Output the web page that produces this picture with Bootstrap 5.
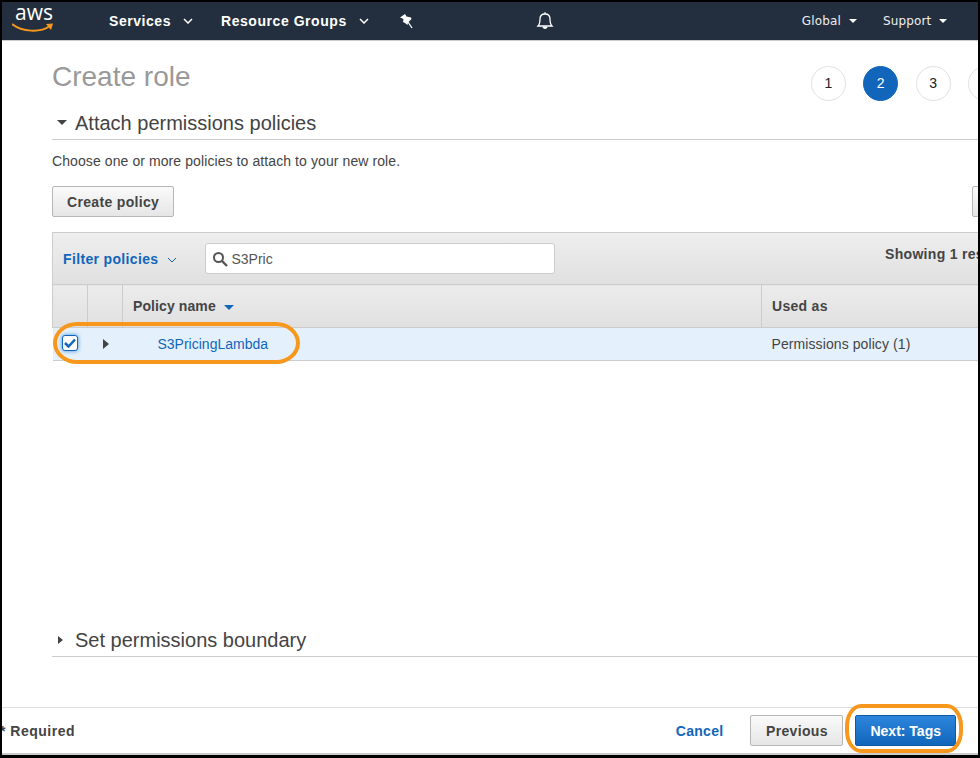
<!DOCTYPE html>
<html lang="en">
<head>
    <meta charset="UTF-8">
    <title>Create role</title>
    <link href="https://cdn.jsdelivr.net/npm/bootstrap@5.3.0/dist/css/bootstrap.min.css" rel="stylesheet">
    <style>
        html, body { height: 100%; margin: 0; background: #000; overflow: hidden; }
        body { font-family: "Liberation Sans", Arial, sans-serif; font-size: 14px; color: #444; }
        .console-frame { width: 976px; height: 753px; margin: 2px 0 0 2px; background: #fff; overflow: hidden; position: relative; }
        .top-nav { height: 38px; background: #232f3e; color: #fff; flex: none; }
        .nav-rule { height: 1px; background: #ccc; flex: none; }
        .aws-logo { width: 41px; margin-left: 11px; position: relative; height: 38px; flex: none; }
        .aws-word { position: absolute; left: 2px; top: -2px; font-family: "Open Sans", sans-serif; font-size: 21px; line-height: 24px; color: #fff; }
        .aws-logo svg { position: absolute; left: -1px; top: 21px; }
        .nav-main { font-weight: 700; font-size: 14px; letter-spacing: .55px; }
        .nav-small { font-family: "DejaVu Sans", sans-serif; font-size: 12px; letter-spacing: .15px; color: #eee; }
        .nav-services { margin-left: 55px; }
        .nav-groups { margin-left: 28px; }
        .nav-chevron { margin-left: 12px; }
        .nav-pin { margin-left: 31px; }
        .nav-bell { margin-left: 123px; }
        .nav-global { margin-left: 248px; }
        .nav-support { margin-left: 26px; }
        .page-body { width: 963px; margin-left: 50px; flex: 1 1 auto; display: flex; flex-direction: column; }
        .page-title { font-size: 28px; font-weight: 400; color: #999; margin: 0; line-height: 32px; }
        .title-row { padding-top: 20px; height: 61px; }
        .step-dots { gap: 17.4px; margin-left: auto; margin-top: 5px; flex: none; margin-right: 12px; }
        .step-dot { width: 35px; height: 35px; border-radius: 50%; border: 1px solid #e1e1e1; color: #222; font-size: 14px; display: flex; align-items: center; justify-content: center; background: #fff; }
        .step-dot.on { background: #1166bb; border-color: #1166bb; color: #fff; }
        .section-head { font-size: 20px; line-height: 24px; color: #444; border-bottom: 1px solid #ccc; height: 38px; padding: 4px 0 0 5px; font-weight: 400; margin: 0; display: flex; align-items: center; gap: 8px; flex: none; }
        .intro-text { margin: 12px 0 0; line-height: 18px; letter-spacing: .09px; }
        .action-row { margin-top: 16px; }
        .btn-aws { font-size: 14px; font-weight: 700; color: #444; height: 31px; padding: 1px 14px 0; border: 1px solid #b7b7b7; border-radius: 2px; background: linear-gradient(#fafafa, #e6e6e6); line-height: 28px; letter-spacing: .33px; }
        .btn-clipped { width: 43px; margin-left: auto; }
        .btn-prev { min-width: 93px; }
        .filter-bar { height: 52px; margin-top: 15px; background: linear-gradient(#eee, #e0e0e0); border: 1px solid #ccc; border-bottom: 0; padding: 2px 4px 0 10px; }
        .filter-link { font-weight: 700; color: #1166bb; letter-spacing: .35px; }
        .search-box { width: 350px; height: 31px; margin-left: 28px; margin-bottom: 2px; background: #fff; border: 1px solid #ccc; border-radius: 3px; padding-left: 6px; gap: 4px; color: #555; }
        .search-text { padding-top: 1px; }
        .showing { margin-left: auto; margin-bottom: 10px; font-weight: 700; color: #444; white-space: nowrap; letter-spacing: .3px; }
        .policy-table { table-layout: fixed; width: 100%; margin: 0; border-collapse: collapse; }
        .policy-table th { height: 43px; padding: 0 10px; font-weight: 700; font-size: 14px; color: #444; background: linear-gradient(#ececec, #e0e0e0); border: 1px solid #ccc; vertical-align: middle; letter-spacing: .1px; }
        .policy-table td { height: 33px; padding: 0 10px; background: #e4f1fc; border: 0; border-bottom: 1px solid #ccc; color: #444; vertical-align: middle; }
        .col-tick { width: 35px; }
        .col-name { width: 639px; }
        .policy-table .th-spaced { letter-spacing: .3px; }
        .policy-link { color: #1166bb; padding-left: 25px; }
        .used-cell { letter-spacing: .09px; }
        .check-box { width: 16px; height: 16px; border: 1px solid #1166bb; border-radius: 3px; background: #fff; display: flex; align-items: center; justify-content: center; box-shadow: 0 0 4px #3d8fdc; margin: -2px 0 0 -1px; }
        .caret-r { width: 0; height: 0; border-left: 5px solid #444; border-top: 4px solid transparent; border-bottom: 4px solid transparent; display: inline-block; }
        .caret-d { width: 0; height: 0; border-top: 5px solid #444; border-left: 5px solid transparent; border-right: 5px solid transparent; display: inline-block; }
        .caret-blue { border-top-color: #1166bb; margin-left: 8px; vertical-align: 1px; }
        .caret-row { border-left-width: 6px; border-top-width: 5px; border-bottom-width: 5px; margin-left: 5px; }
        .caret-head { margin: 0 4px 0 1px; }
        .nav-caret { margin-left: 8px; border-top: 4px solid #fff; border-left-width: 4px; border-right-width: 4px; }
        .body-spacer { flex: 1 1 auto; }
        .foot-gap { height: 50px; flex: none; }
        .page-foot { height: 48px; flex: none; border-top: 1px solid #ddd; border-bottom: 2px solid #ccc; padding-right: 22px; }
        .required-note { font-weight: 700; color: #444; margin-right: auto; margin-left: -2px; padding-top: 2px; letter-spacing: .5px; }
        .cancel-link { font-weight: 700; color: #1166bb; margin-right: 27px; padding-top: 2px; letter-spacing: .3px; }
        .btn-next { color: #fff; background: linear-gradient(#2d86dc, #1166bb); border-color: #0e5aa6; margin-left: 12px; padding: 1px 14px 0; letter-spacing: 0; }
        .btn-next:hover { color: #fff; }
        .mark-ring { position: absolute; border: 4px solid #f7981d; }
        .ring-row { left: 51px; top: 320px; width: 247px; height: 42px; border-radius: 24px / 21px; }
        .ring-next { left: 843px; top: 702px; width: 118px; height: 49px; border-radius: 16px / 22px; }
    </style>
</head>
<body>
    <div class="console-frame d-flex flex-column">
        <nav class="top-nav d-flex align-items-center">
            <div class="aws-logo">
                <span class="aws-word">aws</span>
                <svg width="44" height="12" viewBox="0 0 44 12"><path d="M0 1C10 9 28 10 38 3" fill="none" stroke="#f7981d" stroke-width="2"/><path d="M34 1l7-.5-2 6.500z" fill="#f7981d"/></svg>
            </div>
            <span class="nav-main nav-services">Services</span>
            <svg class="nav-chevron" width="10" height="6" viewBox="0 0 10 6"><path d="M1 1l4 4 4-4" fill="none" stroke="#fff" stroke-width="1.5"/></svg>
            <span class="nav-main nav-groups">Resource Groups</span>
            <svg class="nav-chevron" width="10" height="6" viewBox="0 0 10 6"><path d="M1 1l4 4 4-4" fill="none" stroke="#fff" stroke-width="1.5"/></svg>
            <svg class="nav-pin" width="13" height="15" viewBox="0 0 13 15"><path d="M0 3.500L5 0l1.500 2.500L11 3.500l.5 1.500-3.500 3.500-.5 2.500-2.500-2L3 8l.5-3z" fill="#fff"/><path d="M8 8l4 6" stroke="#fff" stroke-width="1.300"/></svg>
            <svg class="nav-bell" width="18" height="20" viewBox="0 0 18 20"><path d="M2 15c2-2 2-4 2-7 0-3 2-5 5-5s5 2 5 5c0 3 0 5 2 7z" fill="none" stroke="#fff" stroke-width="1.300"/><path d="M9 1v2M7 16c0 2 4 2 4 0z" fill="#fff" stroke="#fff"/></svg>
            <span class="nav-small nav-global">Global</span>
            <span class="caret-d nav-caret"></span>
            <span class="nav-small nav-support">Support</span>
            <span class="caret-d nav-caret"></span>
        </nav>
        <div class="nav-rule"></div>
        <main class="page-body">
            <div class="title-row d-flex">
                <h1 class="page-title">Create role</h1>
                <div class="step-dots d-flex">
                    <div class="step-dot">1</div>
                    <div class="step-dot on">2</div>
                    <div class="step-dot">3</div>
                    <div class="step-dot">4</div>
                </div>
            </div>
            <h2 class="section-head"><span class="caret-d"></span>Attach permissions policies</h2>
            <p class="intro-text">Choose one or more policies to attach to your new role.</p>
            <div class="action-row d-flex">
                <button class="btn-aws" type="button">Create policy</button>
                <button class="btn-aws btn-clipped" type="button" aria-label="Policy actions"></button>
            </div>
            <div class="filter-bar d-flex align-items-center">
                <span class="filter-link">Filter policies</span>
                <svg class="ms-2" width="10" height="6" viewBox="0 0 10 6"><path d="M1 1l4 4 4-4" fill="none" stroke="#1166bb" stroke-width="1"/></svg>
                <div class="search-box d-flex align-items-center">
                    <svg width="16" height="16" viewBox="0 0 16 16"><circle cx="6.500" cy="6.500" r="4.500" fill="none" stroke="#555" stroke-width="2"/><path d="M10 10l5 5" stroke="#555" stroke-width="2.400"/></svg>
                    <span class="search-text">S3Pric</span>
                </div>
                <span class="showing">Showing 1 results</span>
            </div>
            <table class="policy-table">
                <colgroup><col class="col-tick"><col class="col-tick"><col class="col-name"><col></colgroup>
                <thead>
                    <tr>
                        <th></th>
                        <th></th>
                        <th>Policy name<span class="caret-d caret-blue"></span></th>
                        <th class="th-spaced">Used as</th>
                    </tr>
                </thead>
                <tbody>
                    <tr>
                        <td><span class="check-box"><svg width="12" height="10" viewBox="0 0 12 10"><path d="M1 5l3.500 3.500L11 1.500" fill="none" stroke="#1166bb" stroke-width="2.500"/></svg></span></td>
                        <td><span class="caret-r caret-row"></span></td>
                        <td><span class="policy-link">S3PricingLambda</span></td>
                        <td class="used-cell">Permissions policy (1)</td>
                    </tr>
                </tbody>
            </table>
            <div class="body-spacer"></div>
            <h2 class="section-head"><span class="caret-r caret-head"></span>Set permissions boundary</h2>
            <div class="foot-gap"></div>
        </main>
        <footer class="page-foot d-flex align-items-center">
            <span class="required-note">* Required</span>
            <span class="cancel-link">Cancel</span>
            <button class="btn-aws btn-prev" type="button">Previous</button>
            <button class="btn-aws btn-next" type="button">Next: Tags</button>
        </footer>
        <div class="mark-ring ring-row"></div>
        <div class="mark-ring ring-next"></div>
    </div>
    <script src="https://cdn.jsdelivr.net/npm/bootstrap@5.3.0/dist/js/bootstrap.bundle.min.js"></script>
</body>
</html>
